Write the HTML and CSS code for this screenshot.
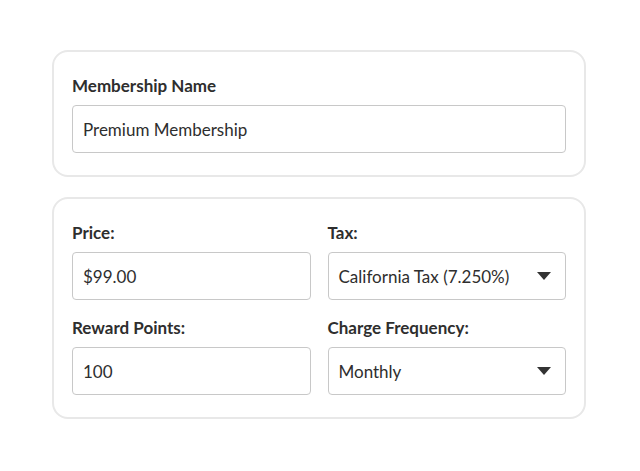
FILE: index.html
```html
<!DOCTYPE html>
<html>
<head>
  <title>Membership</title>
  <link rel="stylesheet" href="styles.css">
</head>
<body>
  <div class="page">
    <div class="card">
      <div class="field">
        <div class="label">Membership Name</div>
        <div class="box">Premium Membership</div>
      </div>
    </div>

    <div class="card">
      <div class="grid">
        <div class="field">
          <div class="label">Price:</div>
          <div class="box">$99.00</div>
        </div>
        <div class="field">
          <div class="label">Tax:</div>
          <div class="box select">
            <span>California Tax (7.250%)</span>
            <span class="caret"></span>
          </div>
        </div>
        <div class="field">
          <div class="label">Reward Points:</div>
          <div class="box">100</div>
        </div>
        <div class="field">
          <div class="label">Charge Frequency:</div>
          <div class="box select">
            <span>Monthly</span>
            <span class="caret"></span>
          </div>
        </div>
      </div>
    </div>
  </div>
</body>
</html>
```

FILE: styles.css
```css
body {
  margin: 0;
  background: #fff;
  font-family: Lato, "Liberation Sans", sans-serif;
  color: #2e2e2e;
}

.page {
  width: 534px;
  margin: 50px 0 0 52px;
  display: flex;
  flex-direction: column;
  gap: 20px;
}

.card {
  border: 2px solid #e8e8e8;
  border-radius: 16px;
  padding: 24px 18px 22px;
}

.grid {
  display: grid;
  grid-template-columns: 1fr 1fr;
  column-gap: 17px;
  row-gap: 18px;
}

.label {
  font-size: 17px;
  font-weight: bold;
  line-height: 20px;
  margin-bottom: 9px;
}

.box {
  height: 48px;
  box-sizing: border-box;
  border: 1.5px solid #c8c8c8;
  border-radius: 4px;
  padding: 0 14px 0 10px;
  display: flex;
  align-items: center;
  font-size: 17px;
}

.select {
  justify-content: space-between;
}

.caret {
  width: 0;
  height: 0;
  border-left: 7px solid transparent;
  border-right: 7px solid transparent;
  border-top: 8px solid #333;
}
```
